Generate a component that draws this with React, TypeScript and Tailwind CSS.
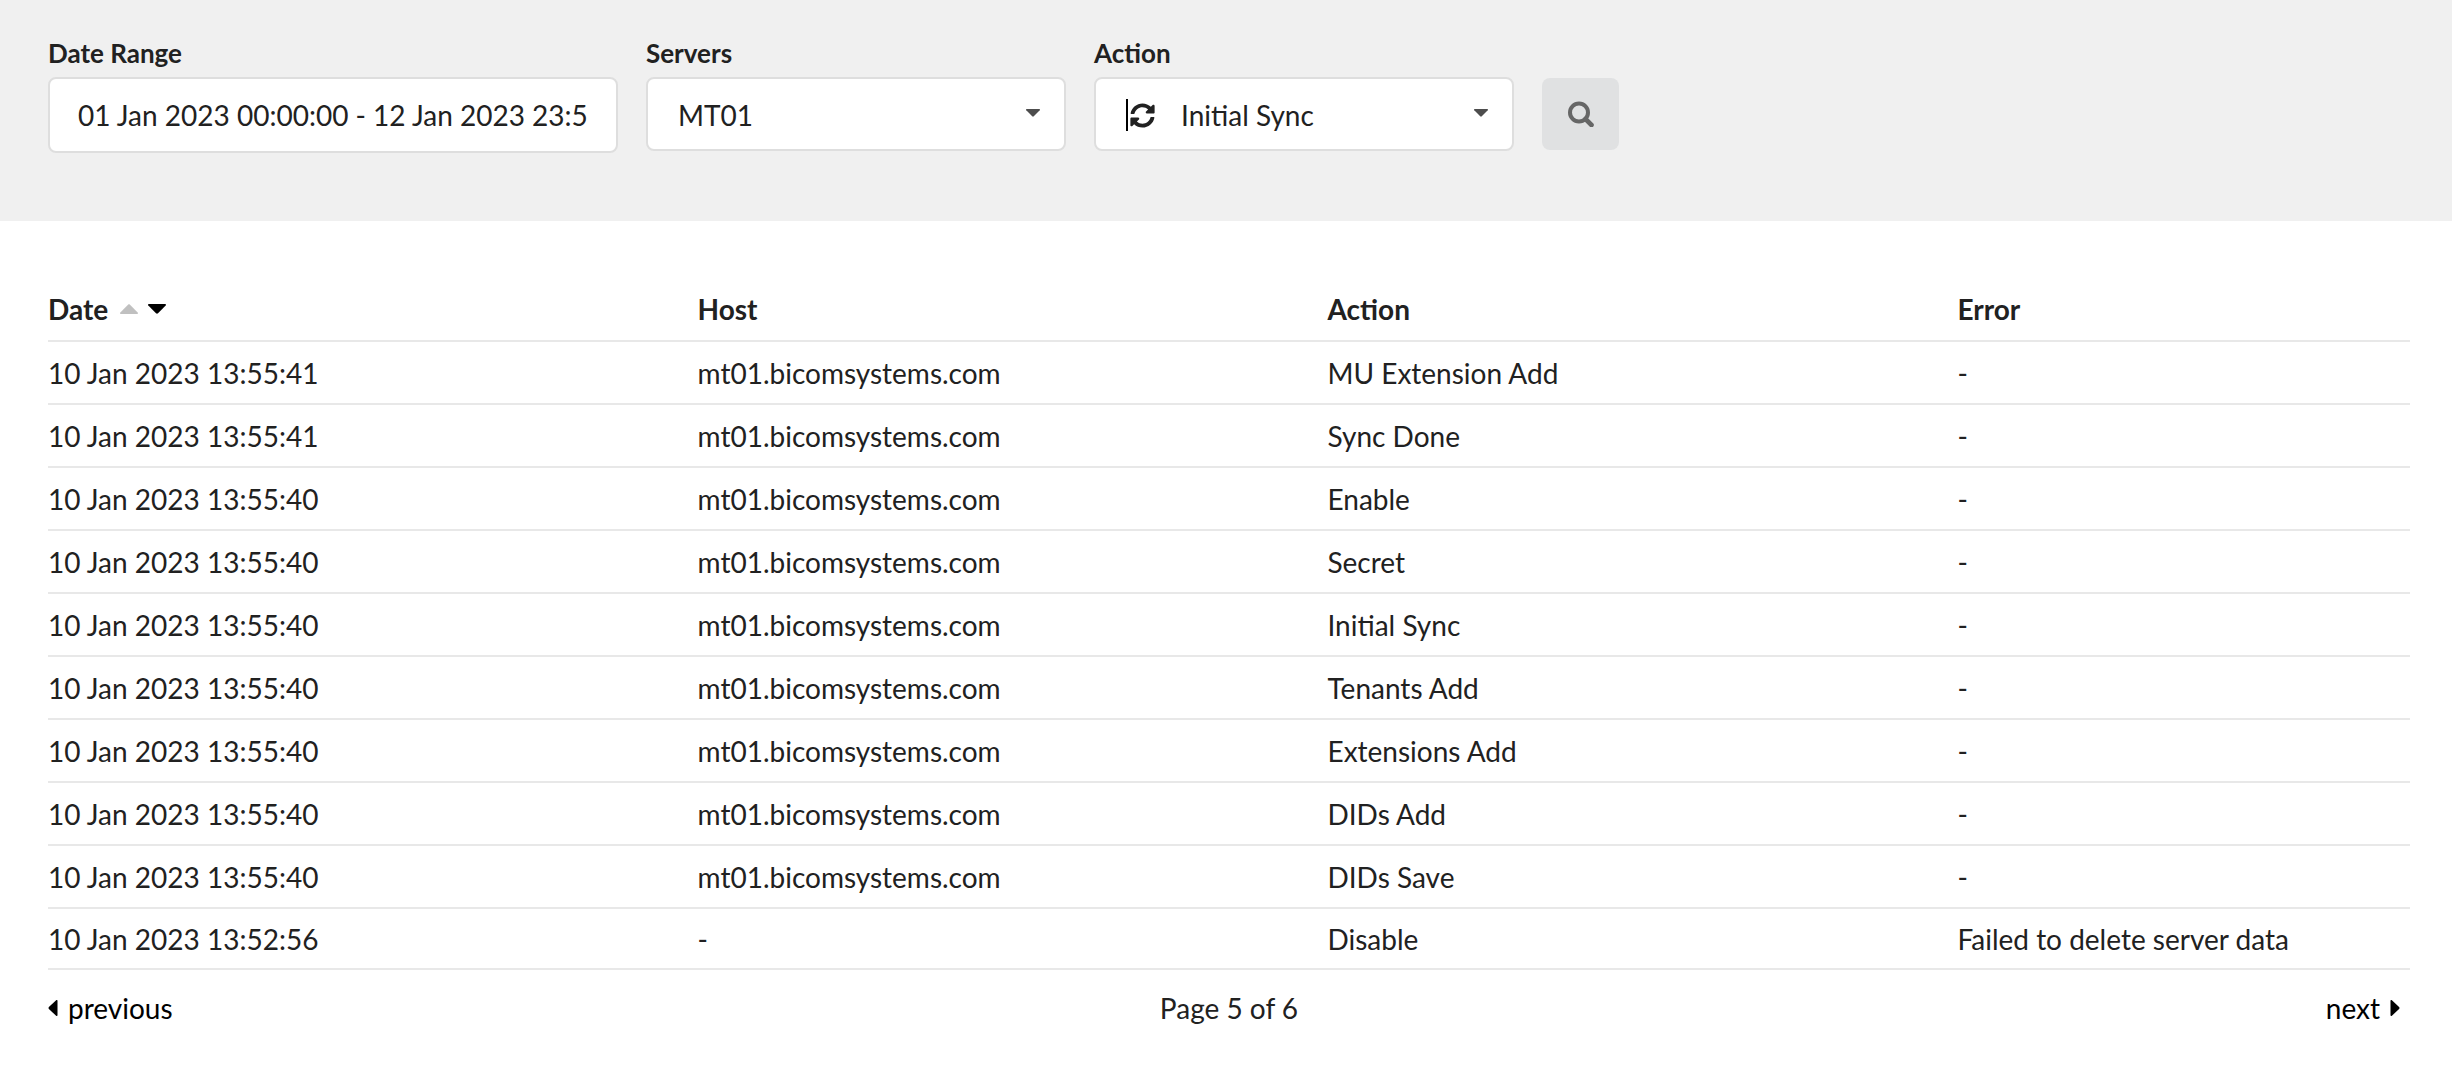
import React from "react";
import { FaSyncAlt } from "react-icons/fa";

const columns = ["Date", "Host", "Action", "Error"];

const host = "mt01.bicomsystems.com";
const rows: string[][] = [
  ["10 Jan 2023 13:55:41", host, "MU Extension Add", "-"],
  ["10 Jan 2023 13:55:41", host, "Sync Done", "-"],
  ["10 Jan 2023 13:55:40", host, "Enable", "-"],
  ["10 Jan 2023 13:55:40", host, "Secret", "-"],
  ["10 Jan 2023 13:55:40", host, "Initial Sync", "-"],
  ["10 Jan 2023 13:55:40", host, "Tenants Add", "-"],
  ["10 Jan 2023 13:55:40", host, "Extensions Add", "-"],
  ["10 Jan 2023 13:55:40", host, "DIDs Add", "-"],
  ["10 Jan 2023 13:55:40", host, "DIDs Save", "-"],
  ["10 Jan 2023 13:52:56", "-", "Disable", "Failed to delete server data"],
];

const label = "text-[26px] leading-9 font-bold";
const field = "w-full rounded-lg border-2 border-[#dedede] bg-white outline-none";

function CaretDown({ className }: { className: string }) {
  return (
    <svg viewBox="0 0 18 10" className={className} fill="currentColor" aria-hidden="true">
      <path d="M.8 0h16.4c.8 0 1 .8.5 1.4L10 9.3c-.6.6-1.4.6-2 0L.3 1.4C-.2.8 0 0 .8 0z" />
    </svg>
  );
}

function CaretRight({ className }: { className: string }) {
  return (
    <svg viewBox="0 0 9 16" className={className} fill="currentColor" aria-hidden="true">
      <path d="M0 .8C0 0 .8-.2 1.4.3l7.2 6.8c.5.5.5 1.3 0 1.8l-7.2 6.8C.8 16.2 0 16 0 15.2z" />
    </svg>
  );
}

export default function App() {
  return (
    <div className="min-h-screen bg-white font-['Lato',sans-serif] text-[28px] leading-9 text-[#212121]">
      <form className="flex items-start gap-7 bg-[#f0f0f0] px-12 pt-[35px] pb-17" onSubmit={(e) => e.preventDefault()}>
        <div className="flex w-[570px] flex-col gap-1.5">
          <label htmlFor="range" className={label}>Date Range</label>
          <input
            id="range"
            className={`${field} h-19 px-7`}
            defaultValue="01 Jan 2023 00:00:00 - 12 Jan 2023 23:59:59"
          />
        </div>
        <div className="flex w-[420px] flex-col gap-1.5">
          <label htmlFor="servers" className={label}>Servers</label>
          <div className="relative">
            <select id="servers" className={`${field} h-[74px] appearance-none px-[30px] pt-0.5`}>
              <option>MT01</option>
            </select>
            <CaretDown className="pointer-events-none absolute top-8 right-[26px] h-2 w-3.5 text-[#4d4d4d]" />
          </div>
        </div>
        <div className="flex w-[420px] flex-col gap-1.5">
          <label htmlFor="action" className={label}>Action</label>
          <div className="relative">
            <select id="action" className={`${field} h-[74px] appearance-none pt-0.5 pr-[30px] pl-[85px]`}>
              <option>Initial Sync</option>
            </select>
            <div className="pointer-events-none absolute top-[22px] left-8 flex items-center gap-0.5">
              <span className="h-8 w-0.5 bg-black" />
              <FaSyncAlt className="size-[25px]" />
            </div>
            <CaretDown className="pointer-events-none absolute top-8 right-[26px] h-2 w-3.5 text-[#4d4d4d]" />
          </div>
        </div>
        <button
          type="submit"
          aria-label="Search"
          className="mt-[43px] flex h-18 w-[77px] items-center justify-center rounded-lg bg-[#e0e1e2] text-[#666]"
        >
          <svg viewBox="0 0 26 26" className="size-[26px]" fill="none" stroke="currentColor" aria-hidden="true">
            <circle cx="11" cy="11.5" r="9" strokeWidth="4" />
            <path d="M17.5 18L23.5 24" strokeWidth="4.6" strokeLinecap="round" />
          </svg>
        </button>
      </form>

      <main className="pt-[57px] pr-[42px] pl-12">
        <table className="w-full table-fixed border-collapse text-left">
          <colgroup>
            <col className="w-[27.5%]" />
            <col className="w-[26.67%]" />
            <col className="w-[26.67%]" />
            <col />
          </colgroup>
          <thead>
            <tr className="h-[63px] border-b-2 border-[#e8e8e8]">
              {columns.map((name, i) => (
                <th key={name} scope="col" className="p-0 font-bold">
                  {i === 0 ? (
                    <span className="flex items-center">
                      {name}
                      <CaretDown className="ml-3 h-2.5 w-[18px] rotate-180 text-[#c0c0c0]" />
                      <CaretDown className="ml-2.5 h-2.5 w-[18px] text-black" />
                    </span>
                  ) : (
                    name
                  )}
                </th>
              ))}
            </tr>
          </thead>
          <tbody>
            {rows.map((row, r) => (
              <tr key={r} className="h-[63px] border-b-2 border-[#e8e8e8] last:h-[61px]">
                {row.map((cell, c) => (
                  <td key={c} className="p-0">{cell}</td>
                ))}
              </tr>
            ))}
          </tbody>
        </table>
        <nav className="grid grid-cols-3 items-center pt-5" aria-label="Pages">
          <a href="#previous" className="flex items-center gap-2.5 text-black">
            <CaretRight className="h-4 w-2.5 rotate-180" />
            previous
          </a>
          <span className="text-center">Page 5 of 6</span>
          <a href="#next" className="flex items-center justify-end gap-2.5 pr-2.5 text-black">
            next
            <CaretRight className="h-4 w-2.5" />
          </a>
        </nav>
      </main>
    </div>
  );
}
